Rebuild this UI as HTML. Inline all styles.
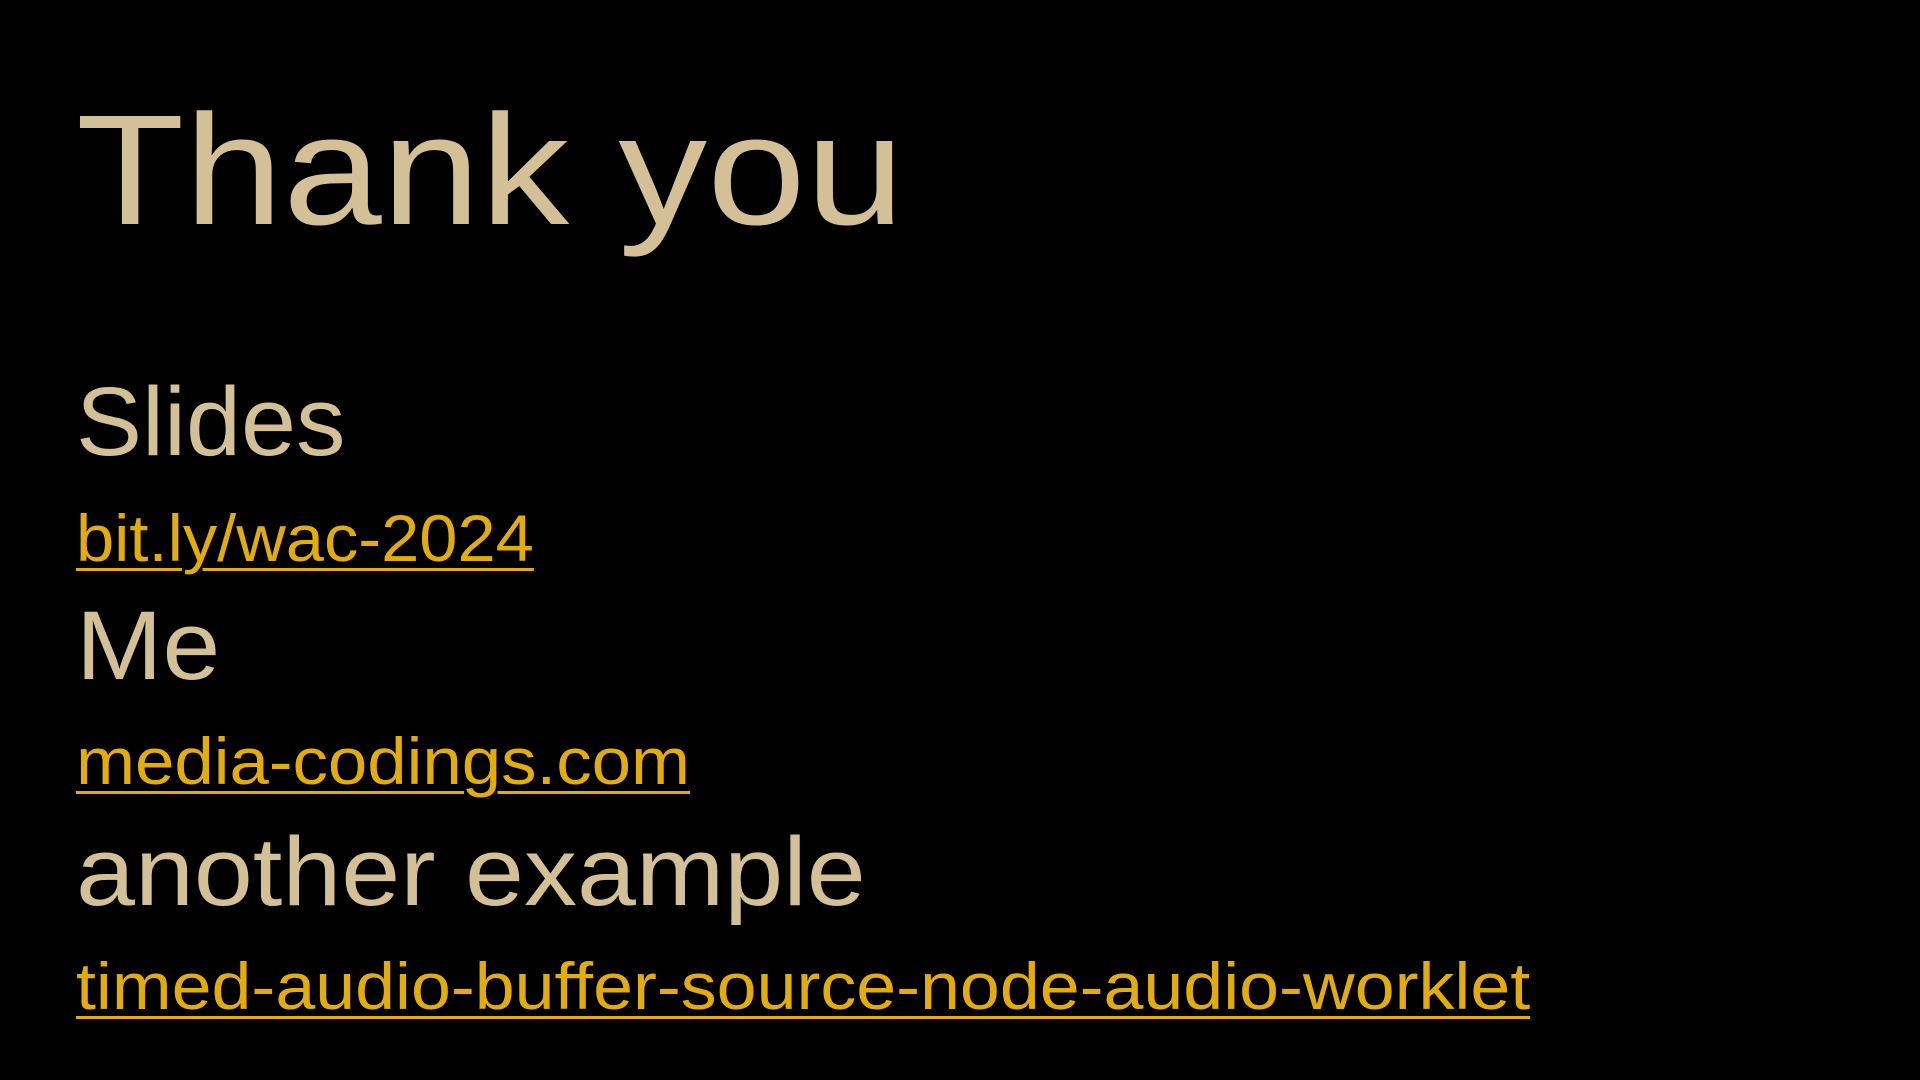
<!DOCTYPE html>
<html><head><meta charset="utf-8"><style>
html,body{margin:0;padding:0;background:#000;width:1920px;height:1080px;overflow:hidden}
div{position:absolute;left:76px;font-family:"Liberation Sans",sans-serif;line-height:1;white-space:nowrap;transform-origin:0 0}
.h{color:#d3c096}
.l{color:#e2ad0c;font-size:66px;text-decoration:underline;text-decoration-thickness:3px;text-underline-offset:7px}
</style></head><body>
<div class="h" style="top:92px;font-size:157px;transform:scaleX(1.13)">Thank you</div>
<div class="h" style="top:373px;font-size:97px;transform:scaleX(1.02)">Slides</div>
<div class="l" style="top:505px;transform:scaleX(1.04)">bit.ly/wac-2024</div>
<div class="h" style="top:597px;font-size:97px;transform:scaleX(1.07)">Me</div>
<div class="l" style="top:728px;transform:scaleX(1.073)">media-codings.com</div>
<div class="h" style="top:823px;font-size:97px;transform:scaleX(1.093)">another example</div>
<div class="l" style="top:953px;transform:scaleX(1.087)">timed-audio-buffer-source-node-audio-worklet</div>
</body></html>
